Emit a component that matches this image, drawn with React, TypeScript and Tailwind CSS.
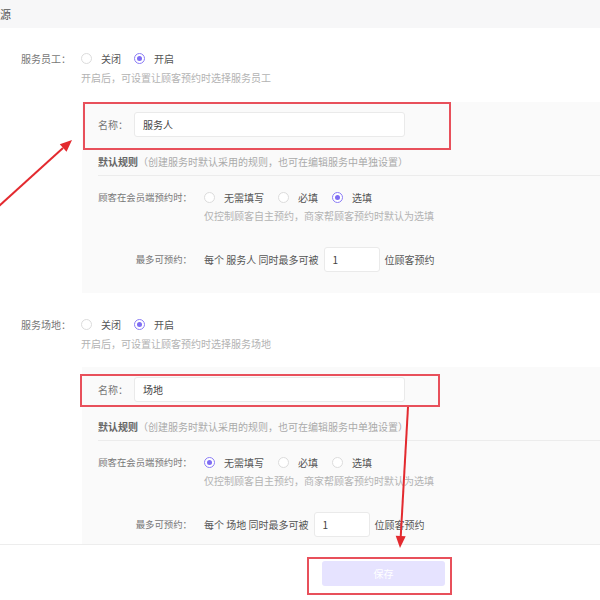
import React from "react";

const font = { fontFamily: '"Noto Sans CJK SC", "Noto Sans", sans-serif' };

const Radio = ({ checked, label }: { checked?: boolean; label: string }) => (
  <div className="flex items-center">
    <span
      className={
        "flex h-[11px] w-[11px] items-center justify-center rounded-full border bg-white " +
        (checked ? "border-[#8b7cf6]" : "border-[#dcdcdc]")
      }
    >
      {checked && <span className="h-[5px] w-[5px] rounded-full bg-[#7f6df3]" />}
    </span>
    <span className="ml-[9px] text-[#555]">{label}</span>
  </div>
);

interface PanelProps {
  name: string;
  unit: string;
  pick: number;
  last?: boolean;
  boxClass: string;
}

const Panel = ({ name, unit, pick, last, boxClass }: PanelProps) => {
  const opts = ["无需填写", "必填", "选填"];
  return (
    <div className={"ml-[82px] bg-[#fafafa] pt-[10px] " + (last ? "pb-[7px]" : "pb-[21px]")}>
      <div className="relative flex h-[25px] items-center pl-[16px]">
        <div className={"pointer-events-none absolute border-2 border-[#e8505b] " + boxClass} />
        <span className="w-[36px] text-[#777]">名称：</span>
        <div className="flex h-[25px] w-[271px] items-center rounded-[3px] border border-[#eaeaea] bg-white pl-[8px] text-[#444]">
          {name}
        </div>
      </div>
      <div className="ml-[16px] mt-[17px] box-content flex h-[14px] items-center border-b border-[#ececec] pb-[7px]">
        <span className="font-semibold text-[#666]">默认规则</span>
        <span className="text-[#aaa]">（创建服务时默认采用的规则，也可在编辑服务中单独设置）</span>
      </div>
      <div className="ml-[16px] mt-[13px] flex h-[16px] items-center">
        <div className="flex w-[94px] shrink-0 justify-end whitespace-nowrap text-[9.4px] text-[#777]">
          <span>顾客在会员端预约时：</span>
        </div>
        <div className="ml-[12px] flex items-center gap-[14px]">
          {opts.map((o, i) => (
            <Radio key={o} label={o} checked={i === pick} />
          ))}
        </div>
      </div>
      <div className="ml-[122px] mt-[4px] h-[14px] leading-[14px] text-[#b3b3b3]">
        仅控制顾客自主预约，商家帮顾客预约时默认为选填
      </div>
      <div className="ml-[16px] mt-[24px] flex items-center">
        <div className="flex w-[94px] shrink-0 justify-end whitespace-nowrap text-[9.4px] text-[#777]">
          <span>最多可预约：</span>
        </div>
        <span className="ml-[12px] text-[#555]">每个 {unit} 同时最多可被</span>
        <div className="ml-[5px] flex h-[25px] w-[56px] items-center rounded-[3px] border border-[#eaeaea] bg-white pl-[8px] text-[#444]">
          1
        </div>
        <span className="ml-[5px] text-[#555]">位顾客预约</span>
      </div>
    </div>
  );
};

const Section = ({ label, hint }: { label: string; hint: string }) => (
  <>
    <div className="flex h-[16px] items-center">
      <span className="w-[81px] pl-[21px] text-[#777]">{label}</span>
      <div className="flex items-center gap-[13px]">
        <Radio label="关闭" />
        <Radio label="开启" checked />
      </div>
    </div>
    <div className="ml-[81px] mt-[5px] h-[14px] leading-[14px] text-[#b3b3b3]">{hint}</div>
  </>
);

export default function App() {
  return (
    <div className="relative h-[600px] w-[600px] overflow-hidden bg-white text-[10px]" style={font}>
      <div className="flex h-[28px] items-center bg-[#f7f7f8] text-[11px] text-[#555]">
        <span>源</span>
      </div>

      <div className="pt-[22px]">
        <Section label="服务员工：" hint="开启后，可设置让顾客预约时选择服务员工" />
        <div className="mt-[17px]">
          <Panel name="服务人" unit="服务人" pick={2} boxClass="left-[1px] -top-[10px] w-[368px] h-[48px]" />
        </div>

        <div className="mt-[23px]">
          <Section label="服务场地：" hint="开启后，可设置让顾客预约时选择服务场地" />
        </div>
        <div className="mt-[16px]">
          <Panel name="场地" unit="场地" pick={0} last boxClass="-left-[2px] -top-[3px] w-[360px] h-[33px]" />
        </div>
      </div>

      <div className="border-t border-[#ededed] pl-[322px] pt-[16px]">
        <div className="relative">
          <div className="pointer-events-none absolute -left-[15px] -top-[4px] h-[38px] w-[145px] border-2 border-[#e8505b]" />
          <button className="flex h-[25px] w-[123px] items-center justify-center rounded-[3px] bg-[#e6e3ff] text-white">
            保存
          </button>
        </div>
      </div>

      <svg className="pointer-events-none absolute left-0 top-0" width="600" height="600">
        <line x1="-2" y1="207" x2="63" y2="148" stroke="#e32a2f" strokeWidth="2" />
        <polygon points="72,140 66.5,151.7 59.8,144.3" fill="#e32a2f" />
        <line x1="408" y1="407" x2="400.7" y2="537" stroke="#e32a2f" strokeWidth="2" />
        <polygon points="400,548 405.7,536.3 395.7,535.7" fill="#e32a2f" />
      </svg>
    </div>
  );
}
